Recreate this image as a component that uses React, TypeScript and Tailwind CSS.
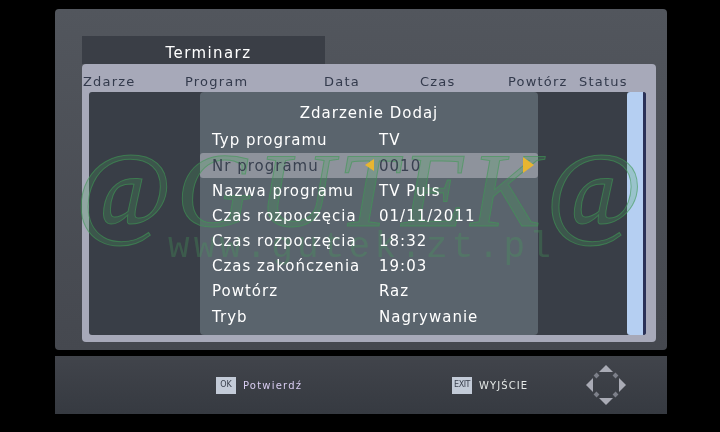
const rows = [
  ["Typ programu", "TV"],
  ["Nr programu", "0010"],
  ["Nazwa programu", "TV Puls"],
  ["Czas rozpoczęcia", "01/11/2011"],
  ["Czas rozpoczęcia", "18:32"],
  ["Czas zakończenia", "19:03"],
  ["Powtórz", "Raz"],
  ["Tryb", "Nagrywanie"],
]

const font = { fontFamily: '"DejaVu Sans", sans-serif' }

function Arrows() {
  return (
    <svg width="42" height="42" viewBox="0 0 42 42">
      <path d="M21 1 L28 8 H14 Z" fill="#a9abb5" />
      <path d="M21 41 L28 34 H14 Z" fill="#a9abb5" />
      <path d="M1 21 L8 14 V28 Z" fill="#a9abb5" />
      <path d="M41 21 L34 14 V28 Z" fill="#a9abb5" />
      <path d="M13 10 L10 13 M29 10 L32 13 M13 32 L10 29 M29 32 L32 29" stroke="#7d808a" strokeWidth="4" />
    </svg>
  )
}

export default function App() {
  return (
    <div style={font} className="relative flex h-[432px] w-[720px] flex-col overflow-hidden bg-black pl-[55px] pr-[53px] pt-[9px] tracking-[1px] text-white blur-[0.4px]">
      <div className="relative h-[341px] rounded-[4px] bg-gradient-to-b from-[#52565d] to-[#45484f] pl-[27px] pr-[11px] pt-[27px]">
        <div className="flex h-[28px] w-[243px] items-end justify-center bg-[#3a3e46] pl-[10px] text-[15px] leading-[21px] tracking-[1.4px]">Terminarz</div>
        <div className="flex h-[278px] flex-col rounded-[4px] bg-[#a7a9b9] pb-[7px] pl-[7px] pr-[10px]">
          <div className="relative flex h-[28px] text-[13px] tracking-[1.2px] text-[#333a4c]">
            <span className="absolute left-[-6px] top-[8px]">Zdarze</span>
            <span className="absolute left-[96px] top-[8px]">Program</span>
            <span className="absolute left-[235px] top-[8px]">Data</span>
            <span className="absolute left-[331px] top-[8px]">Czas</span>
            <span className="absolute left-[419px] top-[8px]">Powtórz</span>
            <span className="absolute left-[490px] top-[8px]">Status</span>
          </div>
          <div className="relative flex flex-1 justify-end rounded-[3px] bg-[#393e47]">
            <div className="absolute bottom-0 left-[111px] top-0 w-[338px] rounded-[4px] bg-[#5a646d] pt-[8px]">
              <div className="relative z-10 mb-[2px] h-[26px] text-center text-[15px] leading-[26px]">Zdarzenie Dodaj</div>
              {rows.map(([label, value], i) => (
                <div key={i} className={`relative flex h-[25.2px] items-center rounded-[3px] pl-[12px] text-[15px] ${i === 1 ? "bg-[#8e939c] text-[#394150]" : ""}`}>
                  <span className="relative z-10 w-[167px] whitespace-nowrap">{label}</span>
                  <span className="relative z-10">{value}</span>
                  {i === 1 && (
                    <>
                      <span className="absolute left-[165px] top-[6px] z-10 h-0 w-0 border-y-[6px] border-r-[9px] border-y-transparent border-r-[#e8b531]" />
                      <span className="absolute left-[323px] top-[4px] z-10 h-0 w-0 border-y-[8px] border-l-[11px] border-y-transparent border-l-[#e8b531]" />
                    </>
                  )}
                </div>
              ))}
            </div>
            <div className="h-full w-[19px] rounded-[3px] border-r-[3px] border-[#2a3158] bg-[#b5cff2]" />
          </div>
        </div>
      </div>
      <div className="mt-[6px] flex h-[58px] items-center bg-gradient-to-b from-[#41444b] to-[#363a41] pl-[161px] text-[10px]">
        <span className="flex h-[17px] w-[20px] items-center justify-center bg-[#c3cbd8] text-[8px] tracking-normal text-[#3c4250]">OK</span>
        <span className="ml-[7px] w-[209px] tracking-[1.2px] text-[#d9cdf2]">Potwierdź</span>
        <span className="flex h-[17px] w-[20px] items-center justify-center bg-[#c3cbd8] text-[8px] tracking-[-0.5px] text-[#3c4250]">EXIT</span>
        <span className="ml-[7px] w-[106px] whitespace-nowrap tracking-[1.1px] text-[#e4e8e6]">WYJŚCIE</span>
        <Arrows />
      </div>
      {/* watermark over the picture */}
      <div className="pointer-events-none absolute left-[75px] top-[131px] whitespace-nowrap text-[105px] italic leading-[120px] tracking-[5px] text-[#46a05a]/25 [-webkit-text-stroke:1px_#3f9a5599] [font-family:'Liberation_Serif',serif]">
        @GUTEK@
      </div>
      <div className="pointer-events-none absolute left-[168px] top-[228px] whitespace-nowrap text-[36px] leading-[40px] tracking-[4.2px] text-[#46a05a]/30 [font-family:'Liberation_Mono',monospace]">
        www.gutek.zt.pl
      </div>
    </div>
  )
}
